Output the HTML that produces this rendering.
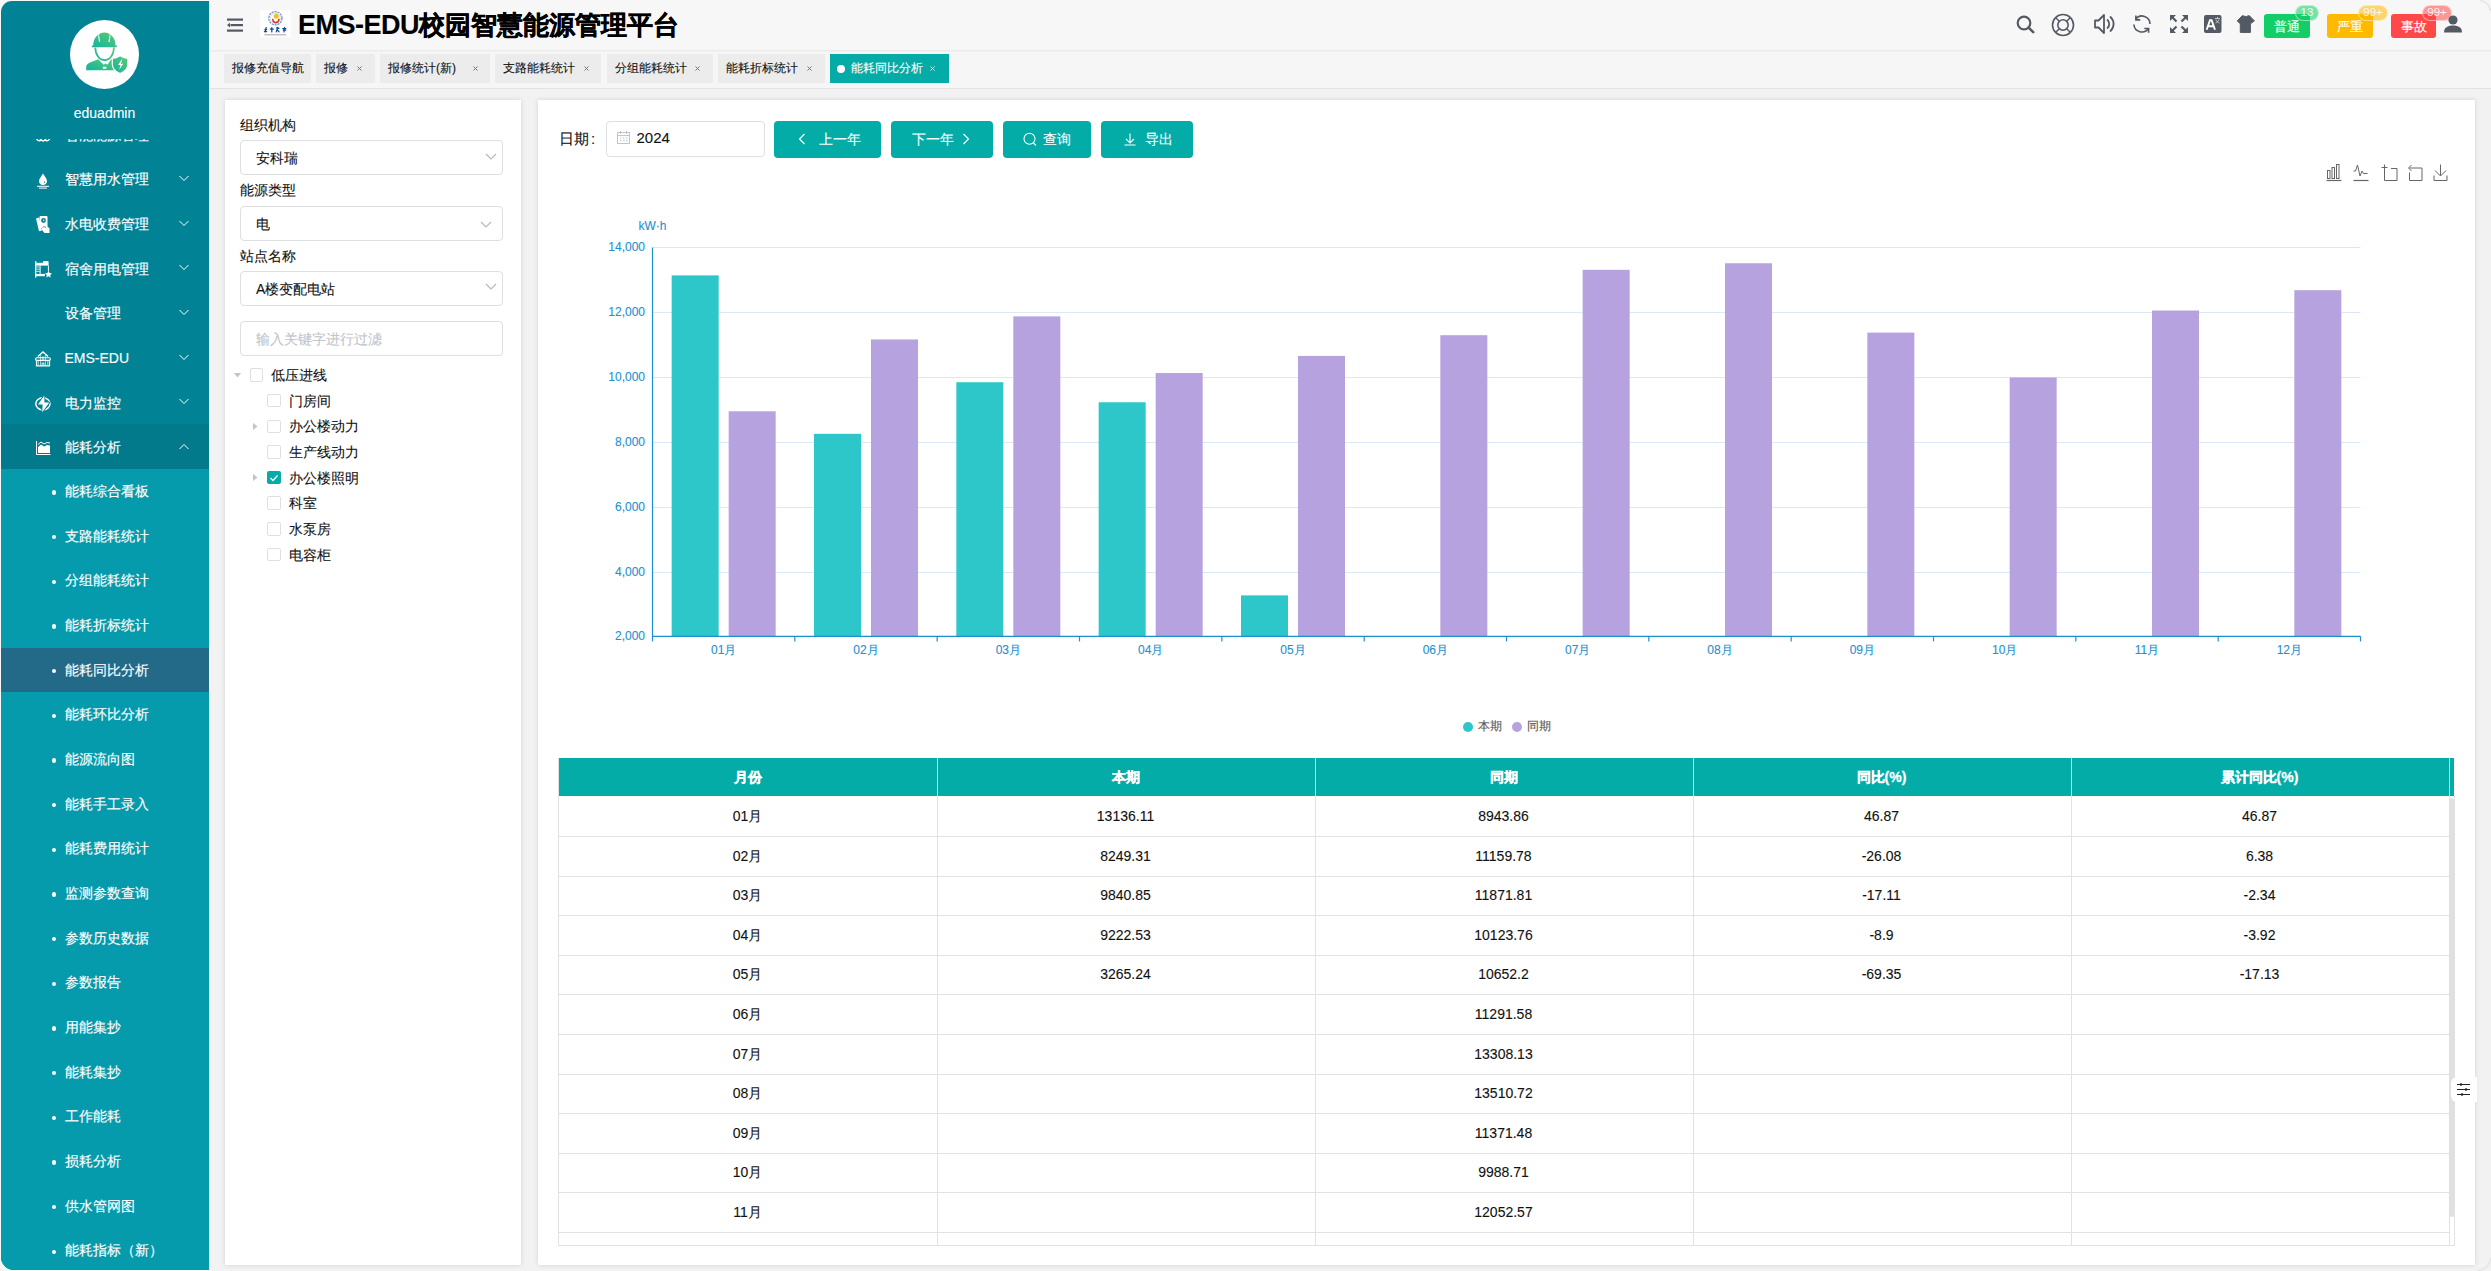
<!DOCTYPE html><html><head><meta charset="utf-8"><style>
*{box-sizing:border-box;margin:0;padding:0}
html,body{width:2491px;height:1271px;overflow:hidden;background:#f7f7f7;font-family:"Liberation Sans",sans-serif;}
.tx{position:absolute;white-space:nowrap;-webkit-text-stroke-width:0.1px}
.ab{position:absolute}
svg{position:absolute;overflow:visible}
</style></head><body>
<div class="ab" style="left:1px;top:1px;width:208px;height:1269px;border-radius:11px 0 0 13px;overflow:hidden;background:#028395">
<div class="ab" style="left:0;top:468px;width:208px;height:810px;background:#069bac"></div>
<div class="ab" style="left:0;top:423px;width:208px;height:45px;background:#027a8b"></div>
<div class="ab" style="left:0;top:647.0500000000001px;width:208px;height:44px;background:#236a88"></div>
</div>
<div class="ab" style="left:70px;top:20px;width:69px;height:69px;border-radius:50%;background:#fff"></div>
<svg style="left:0;top:0" width="1" height="1"><defs><linearGradient id="ag" x1="0" y1="1" x2="1" y2="0"><stop offset="0" stop-color="#14b3a0"/><stop offset="1" stop-color="#5ccb72"/></linearGradient></defs></svg>
<svg style="left:60px;top:10px" width="90" height="90" viewBox="0 0 90 90">
<path fill="url(#ag)" d="M31.8 37.3h25v-1.9h-1.3c0-5.6-2.6-9.6-6.2-11.1-.8-1.2-2.3-1.9-4.9-1.9s-4.1.7-4.9 1.9c-3.6 1.5-6.2 5.5-6.2 11.1h-1.5z"/>
<path d="M38.6 25.5l1 6.5M50 25.5l-1 6.5" stroke="#fff" stroke-width="1.1"/>
<path fill="none" stroke="url(#ag)" stroke-width="1.7" d="M35.3 37.5c0 7.2 4.1 12.6 9.3 12.6s9.3-5.4 9.3-12.6"/>
<path fill="url(#ag)" d="M38.3 49.2l-8.3 3.3c-2.8 1.2-3.8 2.6-3.8 4.6v3.1h28.5V50.6l-3.6-1.4-3.6 5.6-1.9-1.3-1.9 1.3z"/>
<path fill="#fff" d="M42.8 56.7h3.6v2.1h-3.6z"/>
<path fill="url(#ag)" stroke="#fff" stroke-width="1.2" d="M52.3 48.3c2.7 0 5.3-.9 7.8-2.5 2.5 1.6 5.1 2.5 7.8 2.5v5.8c0 4.6-3.1 7.8-7.8 9.4-4.7-1.6-7.8-4.8-7.8-9.4z"/>
<path fill="#fff" d="M61.6 49.5l-3.4 5.6h2.4l-1.4 4.7 4-6h-2.4l1.6-4.3z"/>
</svg>
<div class="tx" style="left:-195.5px;width:600px;text-align:center;top:106.0px;font-size:14px;line-height:14px;color:#fff;font-weight:normal;">eduadmin</div>
<div class="ab" style="left:0px;top:139px;width:209px;height:1131px;overflow:hidden">
<div class="tx" style="left:64.5px;top:-11.469999999999988px;font-size:14px;line-height:14px;color:#fff;font-weight:normal;-webkit-text-stroke:0.15px #fff">智能能源管理</div>
<svg style="left:35px;top:-3px" width="16" height="8"><path fill="none" stroke="#fff" stroke-width="1.4" d="M1.5 2.5c1 2.5 3 3 4.5 1 1.2 2 3 2 4.2 0 1.5 2 3.5 1.5 4.5-1"/></svg>
<svg style="left:177.5px;top:-8.669999999999987px" width="12" height="7"><path fill="none" stroke="#fff" stroke-width="1" d="M1.5 1L6 5.5 10.5 1"/></svg>
<div class="tx" style="left:64.5px;top:33.2px;font-size:14px;line-height:14px;color:#fff;font-weight:normal;-webkit-text-stroke:0.15px #fff">智慧用水管理</div>
<svg style="left:37px;top:33.5px" width="12" height="16" viewBox="0 0 12 16"><path fill="#fff" d="M6 0.5C4 4 2 6 2 8.3 2 10.5 3.8 12 6 12s4-1.5 4-3.7C10 6 8 4 6 0.5z"/><path fill="#028395" d="M8 8.5c0 1-.6 1.8-1.5 2 .5-.6.7-1.2.6-2z"/><rect fill="#fff" x="0" y="12.8" width="12" height="1"/><rect fill="#fff" x="2" y="14.6" width="8" height="1"/></svg>
<svg style="left:177.5px;top:36.0px" width="12" height="7"><path fill="none" stroke="#fff" stroke-width="1" d="M1.5 1L6 5.5 10.5 1"/></svg>
<div class="tx" style="left:64.5px;top:77.87000000000002px;font-size:14px;line-height:14px;color:#fff;font-weight:normal;-webkit-text-stroke:0.15px #fff">水电收费管理</div>
<svg style="left:35px;top:77px" width="16" height="17" viewBox="0 0 16 17"><path fill="#fff" d="M1 2.5l3-1 3 13-3 .8z"/><rect fill="#fff" x="4.5" y="0" width="8" height="12" rx="1"/><circle cx="8.5" cy="4.5" r="2.4" fill="#028395"/><path fill="#fff" d="M8.5 3.3v1.5h1" stroke="#fff" stroke-width=".5"/><path fill="#fff" d="M7 10.5c1-1.5 3-1.8 4.5-.5l3 2.2V17H9.5l-2.5-3z"/><path fill="none" stroke="#028395" stroke-width=".8" d="M7.5 11.5c1-1 2.2-1 3.5 0"/></svg>
<svg style="left:177.5px;top:80.67000000000002px" width="12" height="7"><path fill="none" stroke="#fff" stroke-width="1" d="M1.5 1L6 5.5 10.5 1"/></svg>
<div class="tx" style="left:64.5px;top:122.54000000000002px;font-size:14px;line-height:14px;color:#fff;font-weight:normal;-webkit-text-stroke:0.15px #fff">宿舍用电管理</div>
<svg style="left:35px;top:122px" width="18" height="18" viewBox="0 0 18 18"><g fill="#fff"><rect x="0" y="0" width="1.3" height="16.6"/><rect x="0" y="1.8" width="13.6" height="2.8"/><rect x="8" y="0" width="5.6" height="2.2" rx="1"/><rect x="12.9" y="4.5" width="1" height="5.6"/><rect x="0" y="12.9" width="9.9" height="2.3"/><rect x="4.6" y="4.6" width="1" height="8.3"/><path d="M13.5 9.8l1.1 2.3 2.5.3-1.9 1.7.5 2.5-2.2-1.3-2.2 1.3.5-2.5-1.9-1.7 2.5-.3z"/></g><path d="M1.3 6h3.3M1.3 8.2h3.3M1.3 10.4h3.3" stroke="#fff" stroke-width=".8"/></svg>
<svg style="left:177.5px;top:125.34000000000003px" width="12" height="7"><path fill="none" stroke="#fff" stroke-width="1" d="M1.5 1L6 5.5 10.5 1"/></svg>
<div class="tx" style="left:64.5px;top:167.20999999999998px;font-size:14px;line-height:14px;color:#fff;font-weight:normal;-webkit-text-stroke:0.15px #fff">设备管理</div>
<svg style="left:177.5px;top:170.01px" width="12" height="7"><path fill="none" stroke="#fff" stroke-width="1" d="M1.5 1L6 5.5 10.5 1"/></svg>
<div class="tx" style="left:64.5px;top:211.88000000000005px;font-size:14px;line-height:14px;color:#fff;font-weight:normal;-webkit-text-stroke:0.15px #fff">EMS-EDU</div>
<svg style="left:35px;top:211.5px" width="16" height="16" viewBox="0 0 16 16"><g fill="none" stroke="#fff"><path d="M2.9 5.6L8 0.9l5.1 4.7" stroke-width="1.3"/><path d="M5.6 4.2v10.8M10.4 4.2v10.8" stroke-width=".9" opacity=".75"/><rect x="0.6" y="6.7" width="14.8" height="2.7" rx="1.3" stroke-width="1.1"/><path d="M1.5 9.4v5.5h13V9.4" stroke-width="1.2"/><path d="M2.6 11h1.4M2.6 13h1.4M12 11h1.4M12 13h1.4M7 6.1h2M7 8h2" stroke-width="1"/><path d="M7.1 14.5v-2.5h1.8v2.5" stroke-width=".9"/></g></svg>
<svg style="left:177.5px;top:214.68000000000006px" width="12" height="7"><path fill="none" stroke="#fff" stroke-width="1" d="M1.5 1L6 5.5 10.5 1"/></svg>
<div class="tx" style="left:64.5px;top:256.55px;font-size:14px;line-height:14px;color:#fff;font-weight:normal;-webkit-text-stroke:0.15px #fff">电力监控</div>
<svg style="left:35px;top:255.5px" width="16" height="18" viewBox="0 0 16 18"><ellipse cx="7.9" cy="8.8" rx="7.1" ry="6.1" fill="none" stroke="#fff" stroke-width="1.5"/><path fill="#fff" stroke="#028395" stroke-width="1.8" style="paint-order:stroke" stroke-linejoin="round" d="M9.3 0.6L3 9.4H7.6L7.3 17.3 14.2 7.5H9.5z"/></svg>
<svg style="left:177.5px;top:259.35px" width="12" height="7"><path fill="none" stroke="#fff" stroke-width="1" d="M1.5 1L6 5.5 10.5 1"/></svg>
<div class="tx" style="left:64.5px;top:301.21999999999997px;font-size:14px;line-height:14px;color:#fff;font-weight:normal;-webkit-text-stroke:0.15px #fff">能耗分析</div>
<svg style="left:36px;top:302px" width="15" height="14" viewBox="0 0 15 14"><path fill="none" stroke="#fff" stroke-width="1" d="M.5 0v13.5h14"/><path fill="#fff" d="M2 12V6l3-2.5 3 2 3-1.5 3 .5V12z"/><path fill="none" stroke="#fff" stroke-width="1" d="M2 3.5l3-2.5 3 2 3-1.5 3 .5"/></svg>
<svg style="left:177.5px;top:304.02px" width="12" height="7"><path fill="none" stroke="#fff" stroke-width="1" d="M1.5 6L6 1.5 10.5 6"/></svg>
<div class="ab" style="left:51.8px;top:351.17px;width:4.6px;height:4.6px;border-radius:50%;background:#fff"></div>
<div class="tx" style="left:64.5px;top:345.07px;font-size:14px;line-height:14px;color:#fff;font-weight:normal;-webkit-text-stroke:0.15px #fff">能耗综合看板</div>
<div class="ab" style="left:51.8px;top:395.84000000000003px;width:4.6px;height:4.6px;border-radius:50%;background:#fff"></div>
<div class="tx" style="left:64.5px;top:389.74px;font-size:14px;line-height:14px;color:#fff;font-weight:normal;-webkit-text-stroke:0.15px #fff">支路能耗统计</div>
<div class="ab" style="left:51.8px;top:440.51px;width:4.6px;height:4.6px;border-radius:50%;background:#fff"></div>
<div class="tx" style="left:64.5px;top:434.40999999999997px;font-size:14px;line-height:14px;color:#fff;font-weight:normal;-webkit-text-stroke:0.15px #fff">分组能耗统计</div>
<div class="ab" style="left:51.8px;top:485.18000000000006px;width:4.6px;height:4.6px;border-radius:50%;background:#fff"></div>
<div class="tx" style="left:64.5px;top:479.08000000000004px;font-size:14px;line-height:14px;color:#fff;font-weight:normal;-webkit-text-stroke:0.15px #fff">能耗折标统计</div>
<div class="ab" style="left:51.8px;top:529.85px;width:4.6px;height:4.6px;border-radius:50%;background:#fff"></div>
<div class="tx" style="left:64.5px;top:523.75px;font-size:14px;line-height:14px;color:#fff;font-weight:normal;-webkit-text-stroke:0.15px #fff">能耗同比分析</div>
<div class="ab" style="left:51.8px;top:574.52px;width:4.6px;height:4.6px;border-radius:50%;background:#fff"></div>
<div class="tx" style="left:64.5px;top:568.42px;font-size:14px;line-height:14px;color:#fff;font-weight:normal;-webkit-text-stroke:0.15px #fff">能耗环比分析</div>
<div class="ab" style="left:51.8px;top:619.19px;width:4.6px;height:4.6px;border-radius:50%;background:#fff"></div>
<div class="tx" style="left:64.5px;top:613.09px;font-size:14px;line-height:14px;color:#fff;font-weight:normal;-webkit-text-stroke:0.15px #fff">能源流向图</div>
<div class="ab" style="left:51.8px;top:663.86px;width:4.6px;height:4.6px;border-radius:50%;background:#fff"></div>
<div class="tx" style="left:64.5px;top:657.76px;font-size:14px;line-height:14px;color:#fff;font-weight:normal;-webkit-text-stroke:0.15px #fff">能耗手工录入</div>
<div class="ab" style="left:51.8px;top:708.53px;width:4.6px;height:4.6px;border-radius:50%;background:#fff"></div>
<div class="tx" style="left:64.5px;top:702.43px;font-size:14px;line-height:14px;color:#fff;font-weight:normal;-webkit-text-stroke:0.15px #fff">能耗费用统计</div>
<div class="ab" style="left:51.8px;top:753.2px;width:4.6px;height:4.6px;border-radius:50%;background:#fff"></div>
<div class="tx" style="left:64.5px;top:747.1px;font-size:14px;line-height:14px;color:#fff;font-weight:normal;-webkit-text-stroke:0.15px #fff">监测参数查询</div>
<div class="ab" style="left:51.8px;top:797.8700000000001px;width:4.6px;height:4.6px;border-radius:50%;background:#fff"></div>
<div class="tx" style="left:64.5px;top:791.7700000000001px;font-size:14px;line-height:14px;color:#fff;font-weight:normal;-webkit-text-stroke:0.15px #fff">参数历史数据</div>
<div class="ab" style="left:51.8px;top:842.54px;width:4.6px;height:4.6px;border-radius:50%;background:#fff"></div>
<div class="tx" style="left:64.5px;top:836.4399999999999px;font-size:14px;line-height:14px;color:#fff;font-weight:normal;-webkit-text-stroke:0.15px #fff">参数报告</div>
<div class="ab" style="left:51.8px;top:887.21px;width:4.6px;height:4.6px;border-radius:50%;background:#fff"></div>
<div class="tx" style="left:64.5px;top:881.11px;font-size:14px;line-height:14px;color:#fff;font-weight:normal;-webkit-text-stroke:0.15px #fff">用能集抄</div>
<div class="ab" style="left:51.8px;top:931.8800000000001px;width:4.6px;height:4.6px;border-radius:50%;background:#fff"></div>
<div class="tx" style="left:64.5px;top:925.7800000000001px;font-size:14px;line-height:14px;color:#fff;font-weight:normal;-webkit-text-stroke:0.15px #fff">能耗集抄</div>
<div class="ab" style="left:51.8px;top:976.55px;width:4.6px;height:4.6px;border-radius:50%;background:#fff"></div>
<div class="tx" style="left:64.5px;top:970.4499999999999px;font-size:14px;line-height:14px;color:#fff;font-weight:normal;-webkit-text-stroke:0.15px #fff">工作能耗</div>
<div class="ab" style="left:51.8px;top:1021.22px;width:4.6px;height:4.6px;border-radius:50%;background:#fff"></div>
<div class="tx" style="left:64.5px;top:1015.12px;font-size:14px;line-height:14px;color:#fff;font-weight:normal;-webkit-text-stroke:0.15px #fff">损耗分析</div>
<div class="ab" style="left:51.8px;top:1065.89px;width:4.6px;height:4.6px;border-radius:50%;background:#fff"></div>
<div class="tx" style="left:64.5px;top:1059.7900000000002px;font-size:14px;line-height:14px;color:#fff;font-weight:normal;-webkit-text-stroke:0.15px #fff">供水管网图</div>
<div class="ab" style="left:51.8px;top:1110.56px;width:4.6px;height:4.6px;border-radius:50%;background:#fff"></div>
<div class="tx" style="left:64.5px;top:1104.46px;font-size:14px;line-height:14px;color:#fff;font-weight:normal;-webkit-text-stroke:0.15px #fff">能耗指标（新）</div>
</div>
<div class="ab" style="left:209px;top:0;width:2282px;height:50px;background:#f7f7f7"></div>
<div class="ab" style="left:209px;top:50px;width:2282px;height:2px;background:linear-gradient(#e9e9e9,#f3f3f3)"></div>
<div class="ab" style="left:209px;top:52px;width:2282px;height:36px;background:#f6f6f6"></div>
<div class="ab" style="left:209px;top:88px;width:2282px;height:1px;background:#e2e2e2"></div>
<div class="ab" style="left:209px;top:89px;width:2282px;height:1182px;background:#f2f2f2"></div>
<svg style="left:226px;top:17px" width="18" height="16" viewBox="0 0 18 16"><g fill="#545a63"><rect x="1" y="1.5" width="16" height="2.2"/><rect x="4.5" y="7" width="12.5" height="2.2"/><rect x="1" y="12.5" width="16" height="2.2"/><path d="M1 8.1l3-2.3v4.6z"/></g></svg>
<svg style="left:258px;top:8px" width="36" height="32" viewBox="0 0 36 32">
<rect x="2.3" y="2.3" width="30.4" height="26.7" fill="#fff"/>
<circle cx="17.4" cy="10.3" r="6.6" fill="none" stroke="#6f8cc4" stroke-width="1.2" stroke-dasharray="2.2 0.8"/>
<circle cx="17.4" cy="10.3" r="5" fill="none" stroke="#c8d4ea" stroke-width="0.8"/>
<circle cx="18.2" cy="8.3" r="2.5" fill="#f4c21a"/>
<path d="M14.8 10.8q0 3.8 3 3.8t3.2-3.8" fill="none" stroke="#d8332c" stroke-width="1.6"/>
<path d="M15.8 10.4q.3 2.4 2 2.4t2-2.4" fill="none" stroke="#fff" stroke-width=".8"/>
<g stroke="#0d4a98" stroke-width="1.25" fill="none" stroke-linecap="round">
<path d="M8.2 19.5l-1 4.3M6.8 21.5h1.8M6.4 23.6h2.2"/>
<path d="M12.3 21h3M13.8 19.5v4.4"/>
<path d="M18.5 20l2.5.3M19.8 19.5l-1.6 4.4M19.5 22l1.5 1.8"/>
<path d="M24.8 20.5h3M26.5 19.5l-.5 4.4M25.3 22h2.5"/>
</g>
<rect x="6.3" y="26.1" width="21.7" height="1.3" fill="#9a9a9a" opacity=".7"/>
</svg>
<div class="tx" style="left:298px;top:11px;height:28px;line-height:28px;font-weight:bold;color:#000"><span style="font-size:27px;letter-spacing:-0.5px">EMS-EDU</span><span style="font-size:26px;-webkit-text-stroke:0.4px #000">校园智慧能源管理平台</span></div>
<svg style="left:2016px;top:15px" width="21" height="21" viewBox="0 0 21 21"><circle cx="8" cy="8" r="6.3" fill="none" stroke="#545a63" stroke-width="2.2"/><path d="M12.6 12.6l4.6 4.6" stroke="#545a63" stroke-width="2.6" stroke-linecap="round"/></svg>
<svg style="left:2051px;top:13px" width="24" height="24" viewBox="0 0 24 24"><circle cx="12" cy="12" r="10.5" fill="none" stroke="#545a63" stroke-width="1.6"/><circle cx="12" cy="12" r="5.2" fill="none" stroke="#545a63" stroke-width="1.6"/><path d="M5 5l3.3 3.3M19 5l-3.3 3.3M5 19l3.3-3.3M19 19l-3.3-3.3" stroke="#545a63" stroke-width="1.4"/></svg>
<svg style="left:2093px;top:13px" width="24" height="22" viewBox="0 0 24 22"><path d="M2 7.5h3.5L11 2v18l-5.5-5.5H2z" fill="none" stroke="#545a63" stroke-width="1.8" stroke-linejoin="round"/><path d="M14.5 7a5.5 5.5 0 0 1 0 8M17.5 4a9.5 9.5 0 0 1 0 14" fill="none" stroke="#545a63" stroke-width="1.8" stroke-linecap="round"/></svg>
<svg style="left:2131px;top:14px" width="22" height="21" viewBox="0 0 22 21"><g fill="none" stroke="#545a63" stroke-width="1.6"><path d="M4.6 5.2A8 8 0 0 1 19 9.9"/><path d="M4.9 1.6V5.9H9.3"/><path d="M2.9 10.5A8 8 0 0 0 17.6 14.3"/><path d="M13.3 14.5H17.6V18.8"/></g></svg>
<svg style="left:2169px;top:14px" width="20" height="20" viewBox="0 0 20 20"><g fill="#545a63"><path d="M1 1h6L1 7z"/><path d="M19 1h-6l6 6z"/><path d="M1 19h6L1 13z"/><path d="M19 19h-6l6-6z"/></g><path d="M3 3l4.5 4.5M17 3l-4.5 4.5M3 17l4.5-4.5M17 17l-4.5-4.5" stroke="#545a63" stroke-width="2.2"/></svg>
<svg style="left:2204px;top:15px" width="18" height="18" viewBox="0 0 18 18"><rect x="0" y="0" width="17.5" height="18" rx="2" fill="#545a63"/><path d="M2.6 14.8l3.4-9.6h1.6l3.4 9.6M4.2 11.3h5.2" stroke="#fff" stroke-width="1.9" fill="none"/><path d="M11 3.5h5M13.5 2v1.5M12 4.5c.5 2 2 3 3.5 3.5M15 4.5c-.5 2-2 3-3.5 3.5" stroke="#fff" stroke-width=".6" fill="none"/></svg>
<svg style="left:2236px;top:15px" width="20" height="19" viewBox="0 0 20 19"><path d="M6.4 0.6L1.2 5.9 4.3 8.8V17.4H14.4V8.8L18.4 5.9 13.2 0.6Q9.8 2.6 6.4 0.6z" fill="#545a63" stroke="#545a63" stroke-width="1" stroke-linejoin="round"/></svg>
<div class="ab" style="left:2264px;top:14px;width:46px;height:23.5px;border-radius:3px;background:#13ce66"></div>
<div class="tx" style="left:1987.0px;width:600px;text-align:center;top:19.5px;font-size:13px;line-height:13px;color:#fff;font-weight:normal;">普通</div>
<div class="ab" style="left:2295px;top:4.8px;width:24px;height:16px;border-radius:8px;background:rgba(19,206,102,.55);border:1px solid rgba(255,255,255,.5)"></div>
<div class="tx" style="left:2007.0px;width:600px;text-align:center;top:7.050000000000001px;font-size:11.5px;line-height:11.5px;color:rgba(255,255,255,.85);font-weight:normal;">13</div>
<div class="ab" style="left:2327px;top:14px;width:46px;height:23.5px;border-radius:3px;background:#ffba00"></div>
<div class="tx" style="left:2050.0px;width:600px;text-align:center;top:19.5px;font-size:13px;line-height:13px;color:#fff;font-weight:normal;">严重</div>
<div class="ab" style="left:2358px;top:4.8px;width:30px;height:16px;border-radius:8px;background:rgba(255,186,0,.55);border:1px solid rgba(255,255,255,.5)"></div>
<div class="tx" style="left:2073.0px;width:600px;text-align:center;top:7.050000000000001px;font-size:11.5px;line-height:11.5px;color:rgba(255,255,255,.85);font-weight:normal;">99+</div>
<div class="ab" style="left:2391px;top:14px;width:45px;height:23.5px;border-radius:3px;background:#ff4949"></div>
<div class="tx" style="left:2113.5px;width:600px;text-align:center;top:19.5px;font-size:13px;line-height:13px;color:#fff;font-weight:normal;">事故</div>
<div class="ab" style="left:2422px;top:4.8px;width:30px;height:16px;border-radius:8px;background:rgba(255,73,73,.55);border:1px solid rgba(255,255,255,.5)"></div>
<div class="tx" style="left:2137.0px;width:600px;text-align:center;top:7.050000000000001px;font-size:11.5px;line-height:11.5px;color:rgba(255,255,255,.85);font-weight:normal;">99+</div>
<svg style="left:2443px;top:15px" width="20" height="18" viewBox="0 0 20 18"><circle cx="10" cy="5" r="4.6" fill="#545a63"/><path d="M1 17.5c0-5 3.5-7 9-7s9 2 9 7z" fill="#545a63"/></svg>
<div class="ab" style="left:224px;top:54px;width:87px;height:28.6px;background:#ececec"></div>
<div class="tx" style="left:232px;top:61.5px;font-size:12px;line-height:12px;color:#111;font-weight:normal;">报修充值导航</div>
<div class="ab" style="left:316px;top:54px;width:59px;height:28.6px;background:#ececec"></div>
<div class="tx" style="left:324px;top:61.5px;font-size:12px;line-height:12px;color:#111;font-weight:normal;">报修</div>
<svg style="left:356.5px;top:66px" width="5" height="5"><path d="M.5 .5l4 4M4.5 .5l-4 4" stroke="#777" stroke-width="1"/></svg>
<div class="ab" style="left:380px;top:54px;width:110px;height:28.6px;background:#ececec"></div>
<div class="tx" style="left:388px;top:61.5px;font-size:12px;line-height:12px;color:#111;font-weight:normal;">报修统计(新)</div>
<svg style="left:472.5px;top:66px" width="5" height="5"><path d="M.5 .5l4 4M4.5 .5l-4 4" stroke="#777" stroke-width="1"/></svg>
<div class="ab" style="left:495px;top:54px;width:106px;height:28.6px;background:#ececec"></div>
<div class="tx" style="left:503px;top:61.5px;font-size:12px;line-height:12px;color:#111;font-weight:normal;">支路能耗统计</div>
<svg style="left:584px;top:66px" width="5" height="5"><path d="M.5 .5l4 4M4.5 .5l-4 4" stroke="#777" stroke-width="1"/></svg>
<div class="ab" style="left:607px;top:54px;width:106px;height:28.6px;background:#ececec"></div>
<div class="tx" style="left:615px;top:61.5px;font-size:12px;line-height:12px;color:#111;font-weight:normal;">分组能耗统计</div>
<svg style="left:695px;top:66px" width="5" height="5"><path d="M.5 .5l4 4M4.5 .5l-4 4" stroke="#777" stroke-width="1"/></svg>
<div class="ab" style="left:718px;top:54px;width:107px;height:28.6px;background:#ececec"></div>
<div class="tx" style="left:726px;top:61.5px;font-size:12px;line-height:12px;color:#111;font-weight:normal;">能耗折标统计</div>
<svg style="left:807px;top:66px" width="5" height="5"><path d="M.5 .5l4 4M4.5 .5l-4 4" stroke="#777" stroke-width="1"/></svg>
<div class="ab" style="left:830px;top:54px;width:119px;height:28.6px;background:#05aba7"></div>
<div class="ab" style="left:837px;top:64.5px;width:8px;height:8px;border-radius:50%;background:#fff"></div>
<div class="tx" style="left:851px;top:61.5px;font-size:12px;line-height:12px;color:#fff;font-weight:normal;">能耗同比分析</div>
<svg style="left:930px;top:66px" width="5" height="5"><path d="M.5 .5l4 4M4.5 .5l-4 4" stroke="#e8f8f7" stroke-width="1"/></svg>
<div class="ab" style="left:225px;top:100px;width:296px;height:1165px;background:#fff;box-shadow:0 0 5px rgba(0,0,0,.13)"></div>
<div class="ab" style="left:538px;top:100px;width:1937px;height:1165px;background:#fff;box-shadow:0 0 5px rgba(0,0,0,.13)"></div>
<div class="tx" style="left:240px;top:118.0px;font-size:14px;line-height:14px;color:#111;font-weight:normal;">组织机构</div>
<div class="tx" style="left:240px;top:183.0px;font-size:14px;line-height:14px;color:#111;font-weight:normal;">能源类型</div>
<div class="tx" style="left:240px;top:249.0px;font-size:14px;line-height:14px;color:#111;font-weight:normal;">站点名称</div>
<div class="ab" style="left:240px;top:140px;width:263px;height:35px;border:1px solid #dddfe3;border-radius:4px;background:#fff"></div>
<div class="tx" style="left:256px;top:151.0px;font-size:14px;line-height:14px;color:#111;font-weight:normal;">安科瑞</div>
<svg style="left:485px;top:152.5px" width="12" height="7"><path d="M1 1l5 5 5-5" fill="none" stroke="#b4b8c0" stroke-width="1.2"/></svg>
<div class="ab" style="left:240px;top:205.5px;width:263px;height:35px;border:1px solid #dddfe3;border-radius:4px;background:#fff"></div>
<div class="tx" style="left:256px;top:216.5px;font-size:14px;line-height:14px;color:#111;font-weight:normal;">电</div>
<svg style="left:479.5px;top:220.5px" width="12" height="7"><path d="M1 1l5 5 5-5" fill="none" stroke="#b4b8c0" stroke-width="1.2"/></svg>
<div class="ab" style="left:240px;top:271px;width:263px;height:35px;border:1px solid #dddfe3;border-radius:4px;background:#fff"></div>
<div class="tx" style="left:256px;top:282.0px;font-size:14px;line-height:14px;color:#111;font-weight:normal;">A楼变配电站</div>
<svg style="left:485px;top:282.5px" width="12" height="7"><path d="M1 1l5 5 5-5" fill="none" stroke="#b4b8c0" stroke-width="1.2"/></svg>
<div class="ab" style="left:240px;top:321px;width:263px;height:35px;border:1px solid #dddfe3;border-radius:4px;background:#fff"></div>
<div class="tx" style="left:256px;top:332.0px;font-size:14px;line-height:14px;color:#c0c4cc;font-weight:normal;">输入关键字进行过滤</div>
<svg style="left:234px;top:372.5px" width="8" height="5"><path d="M0 0h7L3.5 4.5z" fill="#c0c4cc"/></svg>
<div class="ab" style="left:249.5px;top:368.2px;width:13.6px;height:13.6px;border-radius:2px;border:1px solid #dddfe3;background:#fff"></div>
<div class="tx" style="left:271.0px;top:368.0px;font-size:14px;line-height:14px;color:#111;font-weight:normal;">低压进线</div>
<div class="ab" style="left:267.3px;top:393.84999999999997px;width:13.6px;height:13.6px;border-radius:2px;border:1px solid #dddfe3;background:#fff"></div>
<div class="tx" style="left:288.8px;top:393.65px;font-size:14px;line-height:14px;color:#111;font-weight:normal;">门房间</div>
<svg style="left:253px;top:422.8px" width="5" height="7"><path d="M0 0v7L4.5 3.5z" fill="#c0c4cc"/></svg>
<div class="ab" style="left:267.3px;top:419.5px;width:13.6px;height:13.6px;border-radius:2px;border:1px solid #dddfe3;background:#fff"></div>
<div class="tx" style="left:288.8px;top:419.3px;font-size:14px;line-height:14px;color:#111;font-weight:normal;">办公楼动力</div>
<div class="ab" style="left:267.3px;top:445.15px;width:13.6px;height:13.6px;border-radius:2px;border:1px solid #dddfe3;background:#fff"></div>
<div class="tx" style="left:288.8px;top:444.95px;font-size:14px;line-height:14px;color:#111;font-weight:normal;">生产线动力</div>
<svg style="left:253px;top:474.1px" width="5" height="7"><path d="M0 0v7L4.5 3.5z" fill="#c0c4cc"/></svg>
<div class="ab" style="left:267.3px;top:470.8px;width:13.6px;height:13.6px;border-radius:2px;background:#04aca8"></div>
<svg style="left:267.3px;top:470.8px" width="14" height="14"><path d="M3.5 7l2.5 2.5 4.5-5" fill="none" stroke="#fff" stroke-width="1.3"/></svg>
<div class="tx" style="left:288.8px;top:470.6px;font-size:14px;line-height:14px;color:#111;font-weight:normal;">办公楼照明</div>
<div class="ab" style="left:267.3px;top:496.45px;width:13.6px;height:13.6px;border-radius:2px;border:1px solid #dddfe3;background:#fff"></div>
<div class="tx" style="left:288.8px;top:496.25px;font-size:14px;line-height:14px;color:#111;font-weight:normal;">科室</div>
<div class="ab" style="left:267.3px;top:522.1px;width:13.6px;height:13.6px;border-radius:2px;border:1px solid #dddfe3;background:#fff"></div>
<div class="tx" style="left:288.8px;top:521.9px;font-size:14px;line-height:14px;color:#111;font-weight:normal;">水泵房</div>
<div class="ab" style="left:267.3px;top:547.75px;width:13.6px;height:13.6px;border-radius:2px;border:1px solid #dddfe3;background:#fff"></div>
<div class="tx" style="left:288.8px;top:547.55px;font-size:14px;line-height:14px;color:#111;font-weight:normal;">电容柜</div>
<div class="tx" style="left:559px;top:130.5px;font-size:15px;line-height:15px;color:#111;font-weight:normal;">日期<span style="margin-left:2px">:</span></div>
<div class="ab" style="left:606px;top:121px;width:159px;height:36px;border:1px solid #dddfe3;border-radius:4px;background:#fff"></div>
<svg style="left:617px;top:131px" width="13" height="13" viewBox="0 0 13 13"><rect x=".5" y="1.5" width="12" height="11" fill="none" stroke="#c0c4cc" stroke-width="1"/><path d="M.5 4.5h12M3.5 0v3M9.5 0v3" stroke="#c0c4cc" stroke-width="1"/><path d="M3 7h1.5M6 7h1.5M9 7h1.5M3 9.5h1.5M6 9.5h1.5M9 9.5h1.5" stroke="#c0c4cc" stroke-width="1"/></svg>
<div class="tx" style="left:636.5px;top:130.3px;font-size:15px;line-height:15px;color:#111;font-weight:normal;">2024</div>
<div class="ab" style="left:774px;top:121px;width:107px;height:37px;border-radius:4px;background:#04aca8"></div>
<div class="ab" style="left:891px;top:121px;width:102px;height:37px;border-radius:4px;background:#04aca8"></div>
<div class="ab" style="left:1003px;top:121px;width:88px;height:37px;border-radius:4px;background:#04aca8"></div>
<div class="ab" style="left:1101px;top:121px;width:92px;height:37px;border-radius:4px;background:#04aca8"></div>
<svg style="left:798px;top:133px" width="8" height="12"><path d="M6.5 1L1.5 6l5 5" fill="none" stroke="#fff" stroke-width="1.1"/></svg>
<div class="tx" style="left:819px;top:131.7px;font-size:14px;line-height:14px;color:#fff;font-weight:normal;">上一年</div>
<div class="tx" style="left:911.5px;top:131.7px;font-size:14px;line-height:14px;color:#fff;font-weight:normal;">下一年</div>
<svg style="left:962px;top:133px" width="8" height="12"><path d="M1.5 1l5 5-5 5" fill="none" stroke="#fff" stroke-width="1.1"/></svg>
<svg style="left:1023px;top:131.5px" width="15" height="15"><circle cx="6.5" cy="6.8" r="5.5" fill="none" stroke="#fff" stroke-width="1.1"/><path d="M10.5 11l2.5 2.5" stroke="#fff" stroke-width="1.1"/></svg>
<div class="tx" style="left:1042.5px;top:131.7px;font-size:14px;line-height:14px;color:#fff;font-weight:normal;">查询</div>
<svg style="left:1124px;top:132.5px" width="12" height="13"><path d="M6 0.5v9M2 6l4 4 4-4M0.5 12h11" fill="none" stroke="#fff" stroke-width="1.1"/></svg>
<div class="tx" style="left:1145px;top:131.7px;font-size:14px;line-height:14px;color:#fff;font-weight:normal;">导出</div>
<svg style="left:2326px;top:164px" width="18" height="18" viewBox="0 0 18 18"><g fill="none" stroke="#666" stroke-width="1"><rect x="1.5" y="6.5" width="2.5" height="8"/><rect x="6" y="3.5" width="2.5" height="11"/><rect x="10.5" y="0.5" width="2.5" height="14"/></g><path d="M.5 16.5h15" stroke="#666" stroke-width="1.2"/></svg>
<svg style="left:2353px;top:164px" width="18" height="18" viewBox="0 0 18 18"><path d="M.5 7h2l2-6 2.5 11 2-5 1.5 2.5h4" fill="none" stroke="#666" stroke-width="1"/><path d="M.5 16.5h15" stroke="#666" stroke-width="1.2"/></svg>
<svg style="left:2381px;top:164px" width="18" height="18" viewBox="0 0 18 18"><path d="M3.5 .5v16h12.5v-12h-6M.5 3.5h6" fill="none" stroke="#666" stroke-width="1"/></svg>
<svg style="left:2408px;top:164px" width="18" height="18" viewBox="0 0 18 18"><path d="M1.5 4h12.5v12.5h-12.5v-8M.5 4l3-3M.5 4l3 3" fill="none" stroke="#666" stroke-width="1"/></svg>
<svg style="left:2433px;top:164px" width="18" height="18" viewBox="0 0 18 18"><path d="M7.5 .5v11M2 6.5l5.5 5.5 5.5-5.5M1 11.5v5h13v-5" fill="none" stroke="#666" stroke-width="1"/></svg>
<svg style="left:0;top:0" width="2491" height="1271"><path d="M652.5 572.5H2360.5" stroke="#dbe9f6" stroke-width="1"/><path d="M652.5 507.5H2360.5" stroke="#dbe9f6" stroke-width="1"/><path d="M652.5 442.5H2360.5" stroke="#dbe9f6" stroke-width="1"/><path d="M652.5 377.5H2360.5" stroke="#dbe9f6" stroke-width="1"/><path d="M652.5 312.5H2360.5" stroke="#dbe9f6" stroke-width="1"/><path d="M652.5 247.5H2360.5" stroke="#dbe9f6" stroke-width="1"/><rect x="671.6666666666666" y="275.40443416666665" width="47" height="360.99556583333333" fill="#2ec7c9"/><rect x="814.0" y="433.8182008333333" width="47" height="202.58179916666666" fill="#2ec7c9"/><rect x="956.3333333333334" y="382.2257791666666" width="47" height="254.17422083333338" fill="#2ec7c9"/><rect x="1098.6666666666667" y="402.26965249999995" width="47" height="234.13034750000003" fill="#2ec7c9"/><rect x="1241.0" y="595.3851366666667" width="47" height="41.014863333333324" fill="#2ec7c9"/><rect x="728.6666666666666" y="411.30320499999993" width="47" height="225.09679500000004" fill="#b6a2de"/><rect x="871.0" y="339.47046499999993" width="47" height="296.92953500000004" fill="#b6a2de"/><rect x="1013.3333333333334" y="316.3888258333333" width="47" height="320.01117416666665" fill="#b6a2de"/><rect x="1155.6666666666667" y="373.05478" width="47" height="263.34522" fill="#b6a2de"/><rect x="1298.0" y="355.92451666666665" width="47" height="280.47548333333333" fill="#b6a2de"/><rect x="1440.3333333333335" y="335.19794833333333" width="47" height="301.20205166666665" fill="#b6a2de"/><rect x="1582.6666666666667" y="269.8281191666667" width="47" height="366.5718808333333" fill="#b6a2de"/><rect x="1725.0" y="263.2608266666666" width="47" height="373.13917333333336" fill="#b6a2de"/><rect x="1867.3333333333335" y="332.6078566666667" width="47" height="303.7921433333333" fill="#b6a2de"/><rect x="2009.6666666666667" y="377.43265083333335" width="47" height="258.9673491666666" fill="#b6a2de"/><rect x="2152.0" y="310.52918916666664" width="47" height="325.87081083333334" fill="#b6a2de"/><rect x="2294.3333333333335" y="290.19" width="47" height="346.21" fill="#b6a2de"/><path d="M652.5 247.4V636.4H2360.5" fill="none" stroke="#1b8fd0" stroke-width="1.2"/><path d="M652.5 636.4v5" stroke="#1b8fd0" stroke-width="1.2"/><path d="M794.8333333333334 636.4v5" stroke="#1b8fd0" stroke-width="1.2"/><path d="M937.1666666666667 636.4v5" stroke="#1b8fd0" stroke-width="1.2"/><path d="M1079.5 636.4v5" stroke="#1b8fd0" stroke-width="1.2"/><path d="M1221.8333333333335 636.4v5" stroke="#1b8fd0" stroke-width="1.2"/><path d="M1364.1666666666667 636.4v5" stroke="#1b8fd0" stroke-width="1.2"/><path d="M1506.5 636.4v5" stroke="#1b8fd0" stroke-width="1.2"/><path d="M1648.8333333333335 636.4v5" stroke="#1b8fd0" stroke-width="1.2"/><path d="M1791.1666666666667 636.4v5" stroke="#1b8fd0" stroke-width="1.2"/><path d="M1933.5 636.4v5" stroke="#1b8fd0" stroke-width="1.2"/><path d="M2075.8333333333335 636.4v5" stroke="#1b8fd0" stroke-width="1.2"/><path d="M2218.166666666667 636.4v5" stroke="#1b8fd0" stroke-width="1.2"/><path d="M2360.5 636.4v5" stroke="#1b8fd0" stroke-width="1.2"/></svg>
<div class="tx" style="left:45px;width:600px;text-align:right;top:630.4px;font-size:12px;line-height:12px;color:#2291d1;font-weight:normal;">2,000</div>
<div class="tx" style="left:45px;width:600px;text-align:right;top:565.5666666666666px;font-size:12px;line-height:12px;color:#2291d1;font-weight:normal;">4,000</div>
<div class="tx" style="left:45px;width:600px;text-align:right;top:500.73333333333335px;font-size:12px;line-height:12px;color:#2291d1;font-weight:normal;">6,000</div>
<div class="tx" style="left:45px;width:600px;text-align:right;top:435.9px;font-size:12px;line-height:12px;color:#2291d1;font-weight:normal;">8,000</div>
<div class="tx" style="left:45px;width:600px;text-align:right;top:371.06666666666666px;font-size:12px;line-height:12px;color:#2291d1;font-weight:normal;">10,000</div>
<div class="tx" style="left:45px;width:600px;text-align:right;top:306.2333333333333px;font-size:12px;line-height:12px;color:#2291d1;font-weight:normal;">12,000</div>
<div class="tx" style="left:45px;width:600px;text-align:right;top:241.39999999999998px;font-size:12px;line-height:12px;color:#2291d1;font-weight:normal;">14,000</div>
<div class="tx" style="left:352.5px;width:600px;text-align:center;top:219.5px;font-size:12px;line-height:12px;color:#2291d1;font-weight:normal;">kW·h</div>
<div class="tx" style="left:423.66666666666663px;width:600px;text-align:center;top:643.5px;font-size:12px;line-height:12px;color:#2291d1;font-weight:normal;">01月</div>
<div class="tx" style="left:566.0px;width:600px;text-align:center;top:643.5px;font-size:12px;line-height:12px;color:#2291d1;font-weight:normal;">02月</div>
<div class="tx" style="left:708.3333333333334px;width:600px;text-align:center;top:643.5px;font-size:12px;line-height:12px;color:#2291d1;font-weight:normal;">03月</div>
<div class="tx" style="left:850.6666666666667px;width:600px;text-align:center;top:643.5px;font-size:12px;line-height:12px;color:#2291d1;font-weight:normal;">04月</div>
<div class="tx" style="left:993.0px;width:600px;text-align:center;top:643.5px;font-size:12px;line-height:12px;color:#2291d1;font-weight:normal;">05月</div>
<div class="tx" style="left:1135.3333333333335px;width:600px;text-align:center;top:643.5px;font-size:12px;line-height:12px;color:#2291d1;font-weight:normal;">06月</div>
<div class="tx" style="left:1277.6666666666667px;width:600px;text-align:center;top:643.5px;font-size:12px;line-height:12px;color:#2291d1;font-weight:normal;">07月</div>
<div class="tx" style="left:1420.0px;width:600px;text-align:center;top:643.5px;font-size:12px;line-height:12px;color:#2291d1;font-weight:normal;">08月</div>
<div class="tx" style="left:1562.3333333333335px;width:600px;text-align:center;top:643.5px;font-size:12px;line-height:12px;color:#2291d1;font-weight:normal;">09月</div>
<div class="tx" style="left:1704.6666666666667px;width:600px;text-align:center;top:643.5px;font-size:12px;line-height:12px;color:#2291d1;font-weight:normal;">10月</div>
<div class="tx" style="left:1847.0px;width:600px;text-align:center;top:643.5px;font-size:12px;line-height:12px;color:#2291d1;font-weight:normal;">11月</div>
<div class="tx" style="left:1989.3333333333335px;width:600px;text-align:center;top:643.5px;font-size:12px;line-height:12px;color:#2291d1;font-weight:normal;">12月</div>
<div class="ab" style="left:1462.8px;top:722px;width:10px;height:10px;border-radius:50%;background:#2ec7c9"></div>
<div class="tx" style="left:1477.5px;top:720.0px;font-size:12px;line-height:12px;color:#555;font-weight:normal;">本期</div>
<div class="ab" style="left:1511.5px;top:722px;width:10px;height:10px;border-radius:50%;background:#b6a2de"></div>
<div class="tx" style="left:1526.5px;top:720.0px;font-size:12px;line-height:12px;color:#555;font-weight:normal;">同期</div>
<div class="ab" style="left:558px;top:758px;width:1px;height:488px;background:#e2e2e2"></div>
<div class="ab" style="left:558px;top:1245px;width:1897px;height:1px;background:#e2e2e2"></div>
<div class="ab" style="left:2454px;top:796px;width:1px;height:450px;background:#e2e2e2"></div>
<div class="ab" style="left:559px;top:758px;width:1895px;height:38px;background:#04aca8"></div>
<div class="ab" style="left:937px;top:758px;width:1px;height:487px;background:#e2e2e2"></div>
<div class="ab" style="left:1315px;top:758px;width:1px;height:487px;background:#e2e2e2"></div>
<div class="ab" style="left:1693px;top:758px;width:1px;height:487px;background:#e2e2e2"></div>
<div class="ab" style="left:2071px;top:758px;width:1px;height:487px;background:#e2e2e2"></div>
<div class="ab" style="left:2449px;top:758px;width:1px;height:487px;background:#e2e2e2"></div>
<div class="tx" style="left:447.5px;width:600px;text-align:center;top:770.0px;font-size:14px;line-height:14px;color:#fff;font-weight:bold;-webkit-text-stroke:0.3px #fff">月份</div>
<div class="tx" style="left:825.5px;width:600px;text-align:center;top:770.0px;font-size:14px;line-height:14px;color:#fff;font-weight:bold;-webkit-text-stroke:0.3px #fff">本期</div>
<div class="tx" style="left:1203.5px;width:600px;text-align:center;top:770.0px;font-size:14px;line-height:14px;color:#fff;font-weight:bold;-webkit-text-stroke:0.3px #fff">同期</div>
<div class="tx" style="left:1581.5px;width:600px;text-align:center;top:770.0px;font-size:14px;line-height:14px;color:#fff;font-weight:bold;-webkit-text-stroke:0.3px #fff">同比(%)</div>
<div class="tx" style="left:1959.5px;width:600px;text-align:center;top:770.0px;font-size:14px;line-height:14px;color:#fff;font-weight:bold;-webkit-text-stroke:0.3px #fff">累计同比(%)</div>
<div class="ab" style="left:559px;top:836px;width:1890px;height:1px;background:#e2e2e2"></div>
<div class="tx" style="left:447.5px;width:600px;text-align:center;top:809.0px;font-size:14px;line-height:14px;color:#111;font-weight:normal;">01月</div>
<div class="tx" style="left:825.5px;width:600px;text-align:center;top:809.0px;font-size:14px;line-height:14px;color:#111;font-weight:normal;">13136.11</div>
<div class="tx" style="left:1203.5px;width:600px;text-align:center;top:809.0px;font-size:14px;line-height:14px;color:#111;font-weight:normal;">8943.86</div>
<div class="tx" style="left:1581.5px;width:600px;text-align:center;top:809.0px;font-size:14px;line-height:14px;color:#111;font-weight:normal;">46.87</div>
<div class="tx" style="left:1959.5px;width:600px;text-align:center;top:809.0px;font-size:14px;line-height:14px;color:#111;font-weight:normal;">46.87</div>
<div class="ab" style="left:559px;top:876px;width:1890px;height:1px;background:#e2e2e2"></div>
<div class="tx" style="left:447.5px;width:600px;text-align:center;top:848.6px;font-size:14px;line-height:14px;color:#111;font-weight:normal;">02月</div>
<div class="tx" style="left:825.5px;width:600px;text-align:center;top:848.6px;font-size:14px;line-height:14px;color:#111;font-weight:normal;">8249.31</div>
<div class="tx" style="left:1203.5px;width:600px;text-align:center;top:848.6px;font-size:14px;line-height:14px;color:#111;font-weight:normal;">11159.78</div>
<div class="tx" style="left:1581.5px;width:600px;text-align:center;top:848.6px;font-size:14px;line-height:14px;color:#111;font-weight:normal;">-26.08</div>
<div class="tx" style="left:1959.5px;width:600px;text-align:center;top:848.6px;font-size:14px;line-height:14px;color:#111;font-weight:normal;">6.38</div>
<div class="ab" style="left:559px;top:915px;width:1890px;height:1px;background:#e2e2e2"></div>
<div class="tx" style="left:447.5px;width:600px;text-align:center;top:888.2px;font-size:14px;line-height:14px;color:#111;font-weight:normal;">03月</div>
<div class="tx" style="left:825.5px;width:600px;text-align:center;top:888.2px;font-size:14px;line-height:14px;color:#111;font-weight:normal;">9840.85</div>
<div class="tx" style="left:1203.5px;width:600px;text-align:center;top:888.2px;font-size:14px;line-height:14px;color:#111;font-weight:normal;">11871.81</div>
<div class="tx" style="left:1581.5px;width:600px;text-align:center;top:888.2px;font-size:14px;line-height:14px;color:#111;font-weight:normal;">-17.11</div>
<div class="tx" style="left:1959.5px;width:600px;text-align:center;top:888.2px;font-size:14px;line-height:14px;color:#111;font-weight:normal;">-2.34</div>
<div class="ab" style="left:559px;top:955px;width:1890px;height:1px;background:#e2e2e2"></div>
<div class="tx" style="left:447.5px;width:600px;text-align:center;top:927.8px;font-size:14px;line-height:14px;color:#111;font-weight:normal;">04月</div>
<div class="tx" style="left:825.5px;width:600px;text-align:center;top:927.8px;font-size:14px;line-height:14px;color:#111;font-weight:normal;">9222.53</div>
<div class="tx" style="left:1203.5px;width:600px;text-align:center;top:927.8px;font-size:14px;line-height:14px;color:#111;font-weight:normal;">10123.76</div>
<div class="tx" style="left:1581.5px;width:600px;text-align:center;top:927.8px;font-size:14px;line-height:14px;color:#111;font-weight:normal;">-8.9</div>
<div class="tx" style="left:1959.5px;width:600px;text-align:center;top:927.8px;font-size:14px;line-height:14px;color:#111;font-weight:normal;">-3.92</div>
<div class="ab" style="left:559px;top:994px;width:1890px;height:1px;background:#e2e2e2"></div>
<div class="tx" style="left:447.5px;width:600px;text-align:center;top:967.4px;font-size:14px;line-height:14px;color:#111;font-weight:normal;">05月</div>
<div class="tx" style="left:825.5px;width:600px;text-align:center;top:967.4px;font-size:14px;line-height:14px;color:#111;font-weight:normal;">3265.24</div>
<div class="tx" style="left:1203.5px;width:600px;text-align:center;top:967.4px;font-size:14px;line-height:14px;color:#111;font-weight:normal;">10652.2</div>
<div class="tx" style="left:1581.5px;width:600px;text-align:center;top:967.4px;font-size:14px;line-height:14px;color:#111;font-weight:normal;">-69.35</div>
<div class="tx" style="left:1959.5px;width:600px;text-align:center;top:967.4px;font-size:14px;line-height:14px;color:#111;font-weight:normal;">-17.13</div>
<div class="ab" style="left:559px;top:1034px;width:1890px;height:1px;background:#e2e2e2"></div>
<div class="tx" style="left:447.5px;width:600px;text-align:center;top:1007.0px;font-size:14px;line-height:14px;color:#111;font-weight:normal;">06月</div>
<div class="tx" style="left:1203.5px;width:600px;text-align:center;top:1007.0px;font-size:14px;line-height:14px;color:#111;font-weight:normal;">11291.58</div>
<div class="ab" style="left:559px;top:1074px;width:1890px;height:1px;background:#e2e2e2"></div>
<div class="tx" style="left:447.5px;width:600px;text-align:center;top:1046.6px;font-size:14px;line-height:14px;color:#111;font-weight:normal;">07月</div>
<div class="tx" style="left:1203.5px;width:600px;text-align:center;top:1046.6px;font-size:14px;line-height:14px;color:#111;font-weight:normal;">13308.13</div>
<div class="ab" style="left:559px;top:1113px;width:1890px;height:1px;background:#e2e2e2"></div>
<div class="tx" style="left:447.5px;width:600px;text-align:center;top:1086.2px;font-size:14px;line-height:14px;color:#111;font-weight:normal;">08月</div>
<div class="tx" style="left:1203.5px;width:600px;text-align:center;top:1086.2px;font-size:14px;line-height:14px;color:#111;font-weight:normal;">13510.72</div>
<div class="ab" style="left:559px;top:1153px;width:1890px;height:1px;background:#e2e2e2"></div>
<div class="tx" style="left:447.5px;width:600px;text-align:center;top:1125.8px;font-size:14px;line-height:14px;color:#111;font-weight:normal;">09月</div>
<div class="tx" style="left:1203.5px;width:600px;text-align:center;top:1125.8px;font-size:14px;line-height:14px;color:#111;font-weight:normal;">11371.48</div>
<div class="ab" style="left:559px;top:1192px;width:1890px;height:1px;background:#e2e2e2"></div>
<div class="tx" style="left:447.5px;width:600px;text-align:center;top:1165.4px;font-size:14px;line-height:14px;color:#111;font-weight:normal;">10月</div>
<div class="tx" style="left:1203.5px;width:600px;text-align:center;top:1165.4px;font-size:14px;line-height:14px;color:#111;font-weight:normal;">9988.71</div>
<div class="ab" style="left:559px;top:1232px;width:1890px;height:1px;background:#e2e2e2"></div>
<div class="tx" style="left:447.5px;width:600px;text-align:center;top:1205.0px;font-size:14px;line-height:14px;color:#111;font-weight:normal;">11月</div>
<div class="tx" style="left:1203.5px;width:600px;text-align:center;top:1205.0px;font-size:14px;line-height:14px;color:#111;font-weight:normal;">12052.57</div>
<div class="ab" style="left:2449px;top:798px;width:5px;height:419px;border-radius:2.5px;background:#e0e0e0"></div>
<div class="ab" style="left:2451px;top:1077px;width:26px;height:25px;border-radius:6px 0 0 6px;background:#fff"></div>
<svg style="left:2456px;top:1082px" width="16" height="16"><path d="M1 2.5h13M1 7.5h13M1 12.5h13" stroke="#222" stroke-width="1.1"/><circle cx="5" cy="2.5" r="1.3" fill="#222"/><circle cx="10" cy="7.5" r="1.3" fill="#222"/><circle cx="6" cy="12.5" r="1.3" fill="#222"/></svg>
<svg style="left:0;top:0" width="2491" height="1271"><path d="M2480 0.8A10 10 0 0 1 2490.2 11" fill="none" stroke="#e6e6e6" stroke-width="1.6"/><path d="M2490.2 1258A12 12 0 0 1 2478 1270.2" fill="none" stroke="#e6e6e6" stroke-width="1.6"/></svg>
</body></html>
